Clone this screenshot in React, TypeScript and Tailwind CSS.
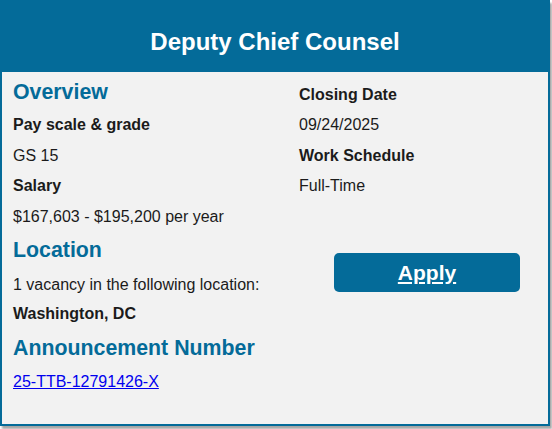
export default function App() {
  return (
    <div className="w-[552px] h-[429px] bg-white" style={{ fontFamily: '"Liberation Sans", Arial, sans-serif' }}>
      <div className="w-[550px] h-[426px] border-2 border-[#046b99] bg-[#f2f2f2] shadow-[2px_3px_2px_rgba(0,0,0,0.35)] flex flex-col">
        {/* Header */}
        <div className="h-[70px] bg-[#046b99] pt-[25px] text-center">
          <h1 className="text-white text-[24px] font-bold leading-[29px]">Deputy Chief Counsel</h1>
        </div>

        {/* Body */}
        <div className="flex pl-[11px] pt-[7px] text-[16px] text-[#1b1b1b]">
          {/* Left column */}
          <div className="w-[286px] flex flex-col">
            <h2 className="text-[#046b99] text-[21.33px] font-bold leading-[26px]">Overview</h2>
            <p className="mt-[10px] font-bold leading-[20px]">Pay scale &amp; grade</p>
            <p className="mt-[11px] leading-[20px]">GS 15</p>
            <p className="mt-[10px] font-bold leading-[20px]">Salary</p>
            <p className="mt-[11px] leading-[20px]">$167,603 - $195,200 per year</p>
            <h2 className="mt-[10px] text-[#046b99] text-[21.33px] font-bold leading-[26px]">Location</h2>
            <p className="mt-[12px] leading-[20px]">1 vacancy in the following location:</p>
            <p className="mt-[9px] font-bold leading-[20px]">Washington, DC</p>
            <h2 className="mt-[11px] text-[#046b99] text-[21.33px] font-bold leading-[26px]">Announcement Number</h2>
            <p className="mt-[11px] leading-[20px]">
              <a href="#" className="text-[#0000ee] underline">25-TTB-12791426-X</a>
            </p>
          </div>

          {/* Right column */}
          <div className="flex-1 flex flex-col">
            <p className="mt-[6px] font-bold leading-[20px]">Closing Date</p>
            <p className="mt-[10px] leading-[20px]">09/24/2025</p>
            <p className="mt-[11px] font-bold leading-[20px]">Work Schedule</p>
            <p className="mt-[10px] leading-[20px]">Full-Time</p>
            <a
              href="#"
              className="mt-[57px] ml-[35px] w-[186px] h-[39px] rounded-[5px] bg-[#046b99] flex items-center justify-center text-white text-[21px] font-bold underline"
            >
              Apply
            </a>
          </div>
        </div>
      </div>
    </div>
  );
}
